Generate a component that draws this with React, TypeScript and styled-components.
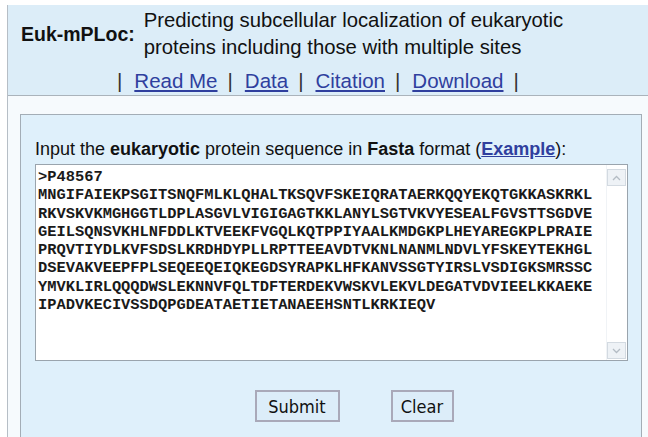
import React from "react";
import styled, {createGlobalStyle} from "styled-components";


const GlobalStyle = createGlobalStyle`
    html, body {
        margin: 0;
        padding: 0;
        background: #fff;
        font-family: "Liberation Sans", Arial, sans-serif;
        color: #111;
    }
`;

const Page = styled.div`
    height: 437px;
    padding: 5px 0 0 7px;
    box-sizing: border-box;
    overflow: hidden;
`;

const Frame = styled.div`
    height: 100%;
    display: flex;
    flex-direction: column;
    border-left: 1px solid #b6bec6;
`;

const Header = styled.header`
    height: 91px;
    flex-shrink: 0;
    background: #dcedf8;
    border-bottom: 1px solid #aab3bb;
    box-sizing: border-box;
`;

const TitleRow = styled.div`
    display: flex;
    align-items: center;
    padding: 2px 0 0 13px;
`;

const Brand = styled.h1`
    margin: 0;
    font-size: 19.5px;
    font-weight: bold;
`;

const Tagline = styled.p`
    margin: 0 0 0 9px;
    font-size: 20.3px;
    line-height: 27px;
`;

const Nav = styled.nav`
    display: flex;
    align-items: baseline;
    padding: 8px 0 0 109px;
    font-size: 20.5px;
`;

const Sep = styled.span`
    color: #333;
    margin: 0 12px 0 10px;

    &:first-child {
        margin-left: 0;
    }
`;

const NavLink = styled.a`
    color: #2f3f9e;
    text-decoration: underline;
`;

const Body = styled.main`
    flex: 1;
    background: #f6fafd;
    padding: 18px 6px 0 12px;
    display: flex;
`;

const Panel = styled.section`
    flex: 1;
    background: #dff0fb;
    border: 1px solid #a3adb6;
    border-bottom: none;
    padding: 23px 13px 0 14px;
`;

const Prompt = styled.p`
    margin: 0;
    font-size: 18px;
    line-height: 22px;

    b {
        font-weight: bold;
    }

    a {
        color: #2f3f9e;
        font-weight: bold;
    }
`;

const SeqBox = styled.div`
    margin-top: 4px;
    width: 593px;
    height: 197px;
    box-sizing: border-box;
    background: #fff;
    border: 1px solid #9aa4ad;
    display: flex;
`;

const SeqText = styled.pre`
    flex: 1;
    margin: 0;
    padding: 3px 0 0 2px;
    font-family: "Liberation Mono", "Courier New", monospace;
    font-size: 15.4px;
    line-height: 18.3px;
    font-weight: bold;
    color: #1a1a1a;
`;

const ScrollBar = styled.div`
    width: 19px;
    display: flex;
    flex-direction: column;
    justify-content: space-between;
    padding: 4px 1px 1px 0;
    border-left: 1px solid #f0f3f6;
`;

const ScrollButton = styled.div`
    height: 15px;
    background: #eef2f6;
    border: 1px solid #d3dae1;
    display: flex;
    align-items: center;
    justify-content: center;
`;

const Actions = styled.div`
    display: flex;
    justify-content: center;
    gap: 51px;
    margin-top: 29px;
    padding-left: 45px;
`;

const Button = styled.button<{$w: number}>`
    width: ${p => p.$w}px;
    height: 32px;
    background: #dcedf9;
    border: 2px solid #a9a9b9;
    font-family: "DejaVu Sans Condensed", "Liberation Sans", sans-serif;
    font-size: 18px;
    color: #111;
    padding: 0;
`;


const SEQUENCE = `>P48567
MNGIFAIEKPSGITSNQFMLKLQHALTKSQVFSKEIQRATAERKQQYEKQTGKKASKRKL
RKVSKVKMGHGGTLDPLASGVLVIGIGAGTKKLANYLSGTVKVYESEALFGVSTTSGDVE
GEILSQNSVKHLNFDDLKTVEEKFVGQLKQTPPIYAALKMDGKPLHEYAREGKPLPRAIE
PRQVTIYDLKVFSDSLKRDHDYPLLRPTTEEAVDTVKNLNANMLNDVLYFSKEYTEKHGL
DSEVAKVEEPFPLSEQEEQEIQKEGDSYRAPKLHFKANVSSGTYIRSLVSDIGKSMRSSC
YMVKLIRLQQQDWSLEKNNVFQLTDFTERDEKVWSKVLEKVLDEGATVDVIEELKKAEKE
IPADVKECIVSSDQPGDEATAETIETANAEEHSNTLKRKIEQV`;

const LINKS = ["Read Me", "Data", "Citation", "Download"];


function Chevron({up}: {up?: boolean}) {
    return (
        <svg width="9" height="6" viewBox="0 0 9 6">
            <path d={up ? "M1 5 L4.5 1.5 L8 5" : "M1 1 L4.5 4.5 L8 1"}
                  fill="none" stroke="#b4bcc4" strokeWidth="1.3"/>
        </svg>
    );
}


export default function App() {
    return (
        <>
            <GlobalStyle/>
            <Page>
                <Frame>
                    <Header>
                        <TitleRow>
                            <Brand>Euk-mPLoc:</Brand>
                            <Tagline>
                                Predicting subcellular localization of eukaryotic<br/>
                                proteins including those with multiple sites
                            </Tagline>
                        </TitleRow>
                        <Nav>
                            <Sep>|</Sep>
                            {LINKS.map(item => (
                                <React.Fragment key={item}>
                                    <NavLink href="#">{item}</NavLink>
                                    <Sep>|</Sep>
                                </React.Fragment>
                            ))}
                        </Nav>
                    </Header>
                    <Body>
                        <Panel>
                            <Prompt>
                                Input the <b>eukaryotic</b> protein sequence in <b>Fasta</b> format
                                (<a href="#">Example</a>):
                            </Prompt>
                            <SeqBox>
                                <SeqText>{SEQUENCE}</SeqText>
                                <ScrollBar>
                                    <ScrollButton><Chevron up/></ScrollButton>
                                    <ScrollButton><Chevron/></ScrollButton>
                                </ScrollBar>
                            </SeqBox>
                            <Actions>
                                <Button $w={85}>Submit</Button>
                                <Button $w={63}>Clear</Button>
                            </Actions>
                        </Panel>
                    </Body>
                </Frame>
            </Page>
        </>
    );
}
